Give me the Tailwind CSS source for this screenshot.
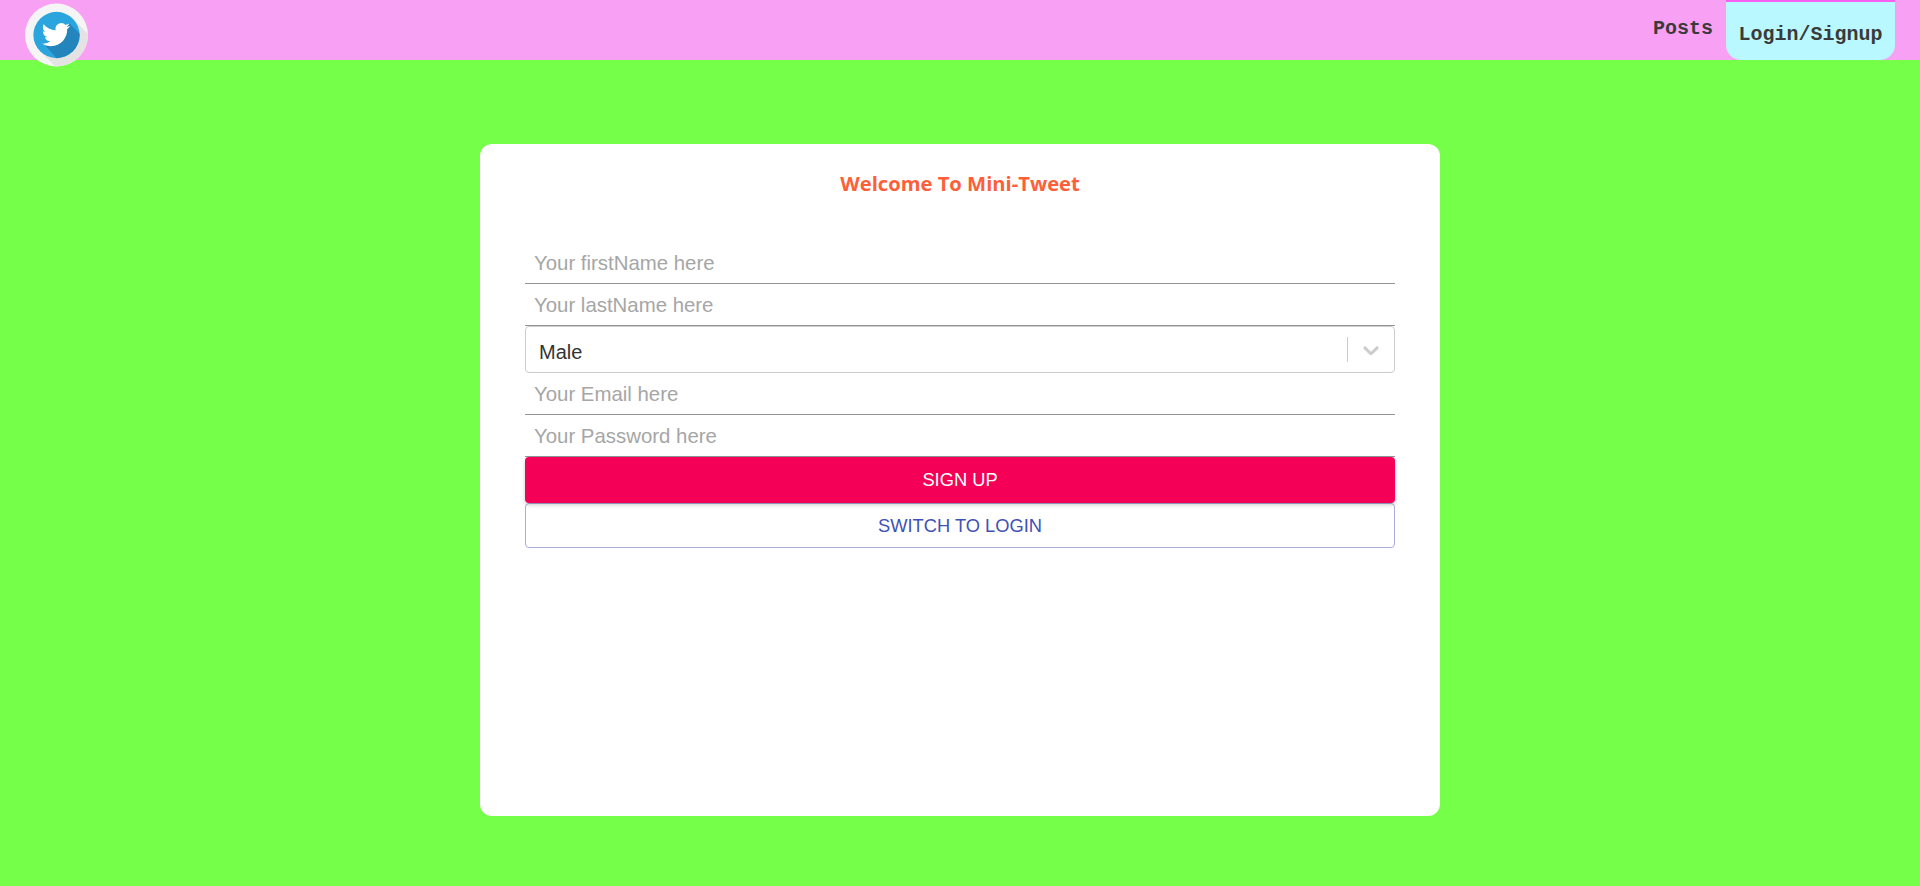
<!DOCTYPE html>
<html lang="en">

<head>
    <meta charset="UTF-8" />
    <meta name="viewport" content="width=device-width, initial-scale=1.0" />
    <title>Mini-Tweet</title>
    <script src="https://cdn.jsdelivr.net/npm/@tailwindcss/browser@4"></script>
</head>

<body class="bg-[#76ff48] h-[886px] overflow-hidden font-['Liberation_Sans',sans-serif]">
    <!-- Navbar -->
    <nav class="h-[60px] bg-[#f8a0f4] flex justify-between">
        <svg class="w-[63px] h-16 ml-[25px] mt-[3px]" viewBox="0 0 64 64">
            <defs>
                <clipPath id="blue">
                    <circle cx="32" cy="32" r="23.5" />
                </clipPath>
                <clipPath id="ring">
                    <circle cx="32" cy="32" r="32" />
                </clipPath>
            </defs>
            <circle cx="32" cy="32" r="32" fill="#f5f5f5" />
            <path d="M48.6 15.4 L88 55 L55 88 L15.4 48.6 Z" fill="#e3e3e3" clip-path="url(#ring)" />
            <circle cx="32" cy="32" r="23.5" fill="#2ba5de" />
            <path d="M45 20 L70 45 L45 70 L20 42 Z" fill="#2484bc" clip-path="url(#blue)" />
            <g transform="translate(17 17.3) scale(1.2)">
                <path fill="#fff" d="M23.95 4.57a10 10 0 0 1-2.82.77 4.96 4.96 0 0 0 2.16-2.72c-.95.55-2 .95-3.12 1.18a4.92 4.92 0 0 0-8.38 4.48C7.69 8.09 4.07 6.13 1.64 3.16a4.82 4.82 0 0 0-.67 2.48c0 1.71.87 3.21 2.19 4.1a4.9 4.9 0 0 1-2.23-.62v.06a4.92 4.92 0 0 0 3.95 4.83 5 5 0 0 1-2.21.08 4.94 4.94 0 0 0 4.6 3.42A9.87 9.87 0 0 1 0 19.54a14 14 0 0 0 7.56 2.21c9.05 0 14-7.5 14-13.98 0-.21 0-.42-.02-.63a9.94 9.94 0 0 0 2.46-2.55z" />
            </g>
        </svg>

        <div class="flex mr-[25px] font-['Liberation_Mono',monospace] font-bold text-xl text-[#3a3a3a]">
            <a href="#" class="pl-[11px] pr-[13px] pt-[17px] leading-[24px]">Posts</a>
            <a href="#" class="block h-[60px] w-[169px] bg-[#b9f8ff] border-t-2 border-[#f65fef] rounded-b-[15px] pt-[21px] text-center leading-[24px]">Login/Signup</a>
        </div>
    </nav>

    <!-- Form card -->
    <main class="w-[960px] h-[672px] mt-[84px] mx-auto bg-white rounded-[12px] px-[45px] pt-[25px]">
        <h2 class="text-center text-[#ff5f38] font-bold text-[20.2px] leading-[28px] mb-[45px] font-['Open_Sans',sans-serif]">Welcome To Mini-Tweet</h2>

        <form class="flex flex-col">
            <input placeholder="Your firstName here" class="h-[42px] pl-[9px] pt-[2px] text-[20.4px] border-b border-[#949494] outline-none placeholder:text-[#a6a6a6]" />
            <input placeholder="Your lastName here" class="h-[42px] pl-[9px] pt-[2px] text-[20.4px] border-b border-[#949494] outline-none placeholder:text-[#a6a6a6]" />

            <div class="h-[47px] flex items-center border border-[#cccccc] rounded-[4px]">
                <span class="flex-1 pl-[13px] pt-[4px] text-xl text-[#333333]">Male</span>
                <span class="w-px h-[25px] bg-[#cccccc]"></span>
                <svg class="w-[26px] h-[26px] ml-[10px] mr-[10px] text-[#cccccc]" viewBox="0 0 20 20" fill="currentColor">
                    <path d="M4.516 7.548c0.436-0.446 1.043-0.481 1.576 0l3.908 3.747 3.908-3.747c0.533-0.481 1.141-0.446 1.574 0 0.436 0.445 0.408 1.197 0 1.615-0.406 0.418-4.695 4.502-4.695 4.502-0.217 0.223-0.502 0.335-0.787 0.335s-0.57-0.112-0.789-0.335c0 0-4.287-4.084-4.695-4.502s-0.436-1.17 0-1.615z" />
                </svg>
            </div>

            <input placeholder="Your Email here" class="h-[42px] pl-[9px] pt-[2px] text-[20.4px] border-b border-[#949494] outline-none placeholder:text-[#a6a6a6]" />
            <input placeholder="Your Password here" class="h-[42px] pl-[9px] pt-[2px] text-[20.4px] border-b border-[#949494] outline-none placeholder:text-[#a6a6a6]" />

            <button type="button" class="relative h-[46px] bg-[#f50057] text-white text-[18.3px] rounded-[4px] shadow-[0_2px_4px_rgba(0,0,0,0.2)]">SIGN UP</button>
            <button type="button" class="h-[45px] text-[#3f51b5] text-[18.3px] border border-[#a7aeda] rounded-[4px]">SWITCH TO LOGIN</button>
        </form>
    </main>
</body>

</html>
